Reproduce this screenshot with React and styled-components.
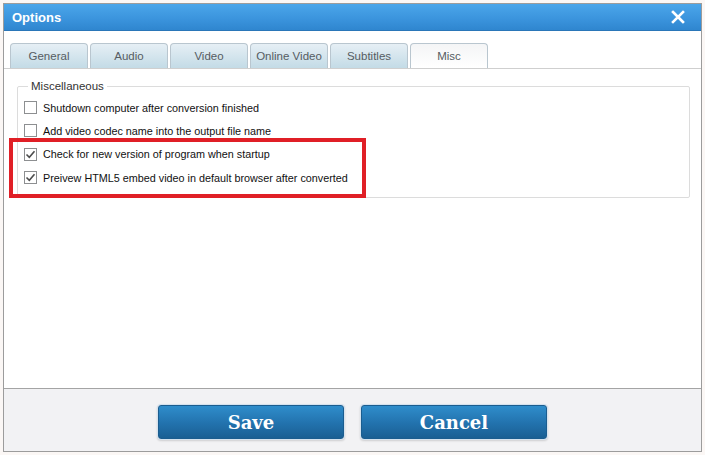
import styled, { createGlobalStyle } from "styled-components";

const Global = createGlobalStyle`
    html, body {
        margin: 0;
        padding: 0;
        background: #fbf7f5;
    }
    #root {
        width: 705px;
        height: 455px;
    }
`

const tabs = ["General", "Audio", "Video", "Online Video", "Subtitles", "Misc"];

const options = [
    { label: "Shutdown computer after conversion finished", checked: false },
    { label: "Add video codec name into the output file name", checked: false },
    { label: "Check for new version of program when startup", checked: true },
    { label: "Preivew HTML5 embed video in default browser after converted", checked: true },
];

const Tick = () => (
    <svg width="11" height="11" viewBox="0 0 11 11">
        <path d="M1.5 5.5 L4.3 8.3 L9.5 2.2" fill="none" stroke="#4d4d4d" strokeWidth="1.6" />
    </svg>
);

const CloseIcon = () => (
    <svg width="14" height="14" viewBox="0 0 14 14">
        <path d="M2 2 L12 12 M12 2 L2 12" stroke="#fff" strokeWidth="2.6" strokeLinecap="square" />
    </svg>
);

const App = () => {
    return (
        <>
            <Global />
            <Window>
                <TitleBar>
                    <Title>Options</Title>
                    <CloseButton><CloseIcon /></CloseButton>
                </TitleBar>
                <Body>
                    <TabRow>
                        {tabs.map((t) => (
                            <Tab key={t} active={t === "Misc"}>{t}</Tab>
                        ))}
                    </TabRow>
                    <Content>
                        <Group>
                            <Legend>Miscellaneous</Legend>
                            {options.map((o) => (
                                <OptionRow key={o.label}>
                                    <CheckBox>{o.checked && <Tick />}</CheckBox>
                                    <span>{o.label}</span>
                                </OptionRow>
                            ))}
                        </Group>
                        <Highlight />
                    </Content>
                </Body>
                <Footer>
                    <Button>Save</Button>
                    <Button>Cancel</Button>
                </Footer>
            </Window>
        </>
    );
}

const Window = styled.div`
    position: relative;
    margin: 3px 0 0 3px;
    width: 697px;
    height: 447px;
    border: 1px solid #9c9c9c;
    background: #fff;
    display: flex;
    flex-direction: column;
    font-family: "Liberation Sans", Arial, sans-serif;
`
const TitleBar = styled.div`
    height: 26px;
    flex: none;
    display: flex;
    align-items: center;
    justify-content: space-between;
    padding: 0 16px 0 8px;
    background: linear-gradient(#4ba6ea, #3a93dc 60%, #2f86cf);
    border-bottom: 1px solid #2a76b8;
`
const Title = styled.div`
    color: #fff;
    font-weight: bold;
    font-size: 13px;
`
const CloseButton = styled.div`
    display: flex;
    align-items: center;
`
const Body = styled.div`
    flex: 1;
    display: flex;
    flex-direction: column;
`
const TabRow = styled.div`
    display: flex;
    gap: 2px;
    padding: 12px 0 0 6px;
    border-bottom: 1px solid #cfcfcf;
`
const Tab = styled.div`
    width: 76px;
    height: 24px;
    border: 1px solid #b9c6cf;
    border-bottom: none;
    border-radius: 4px 4px 0 0;
    display: flex;
    align-items: center;
    justify-content: center;
    font-size: 11.5px;
    color: #565c62;
    background: ${(p) => p.active
        ? "linear-gradient(#f4f5f6, #ffffff)"
        : "linear-gradient(#e6eff5, #c3dbe6)"};
`
const Content = styled.div`
    position: relative;
    flex: 1;
    padding: 11px 11px 0 13px;
`
const Group = styled.fieldset`
    margin: 0;
    padding: 4px 6px 8px 6px;
    border: 1px solid #dcdcdc;
    border-radius: 2px;
    display: flex;
    flex-direction: column;
`
const Legend = styled.legend`
    padding: 0 3px;
    margin-left: 4px;
    font-size: 11.5px;
    color: #333;
`
const OptionRow = styled.div`
    height: 23.3px;
    display: flex;
    align-items: center;
    gap: 6px;
    font-size: 10.8px;
    color: #111;
`
const CheckBox = styled.div`
    width: 11px;
    height: 11px;
    border: 1px solid #8d8f91;
    background: #fff;
    display: flex;
    align-items: center;
    justify-content: center;
`
const Highlight = styled.div`
    position: absolute;
    left: 5px;
    top: 69px;
    width: 349px;
    height: 52px;
    border: 4px solid #e01f26;
`
const Footer = styled.div`
    height: 63px;
    flex: none;
    border-top: 1px solid #a4a4a4;
    background: #f2f2f4;
    display: flex;
    justify-content: center;
    align-items: flex-start;
    gap: 17px;
    padding-top: 16px;
    box-sizing: border-box;
`
const Button = styled.button`
    width: 186px;
    height: 34px;
    border: 1px solid #1b5d8f;
    border-radius: 3px;
    background: linear-gradient(#2f8dcb, #2272ad 55%, #1a5f93);
    box-shadow: 0 0 0 1px #d4e2ee, 0 1px 2px 1px rgba(0, 0, 0, 0.15);
    color: #fff;
    font-family: "DejaVu Serif", "Liberation Serif", serif;
    font-weight: bold;
    font-size: 18px;
`

export default App;
